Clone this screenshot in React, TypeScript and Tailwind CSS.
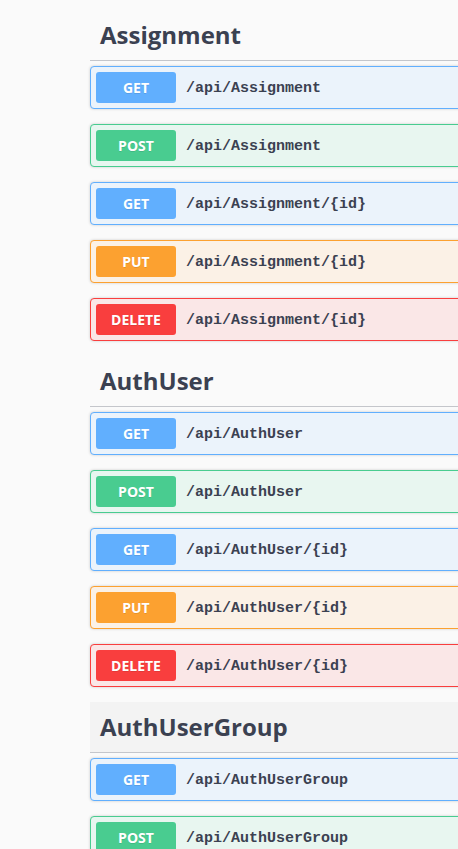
type Method = "GET" | "POST" | "PUT" | "DELETE";

const methodStyles: Record<Method, { block: string; badge: string }> = {
  GET: { block: "border-[#61affe] bg-[#ebf3fb]", badge: "bg-[#61affe]" },
  POST: { block: "border-[#49cc90] bg-[#e8f6f0]", badge: "bg-[#49cc90]" },
  PUT: { block: "border-[#fca130] bg-[#fbf1e6]", badge: "bg-[#fca130]" },
  DELETE: { block: "border-[#f93e3e] bg-[#fae7e7]", badge: "bg-[#f93e3e]" },
};

const tags: { name: string; hover?: boolean; ops: [Method, string][] }[] = [
  {
    name: "Assignment",
    ops: [
      ["GET", "/api/Assignment"],
      ["POST", "/api/Assignment"],
      ["GET", "/api/Assignment/{id}"],
      ["PUT", "/api/Assignment/{id}"],
      ["DELETE", "/api/Assignment/{id}"],
    ],
  },
  {
    name: "AuthUser",
    ops: [
      ["GET", "/api/AuthUser"],
      ["POST", "/api/AuthUser"],
      ["GET", "/api/AuthUser/{id}"],
      ["PUT", "/api/AuthUser/{id}"],
      ["DELETE", "/api/AuthUser/{id}"],
    ],
  },
  {
    name: "AuthUserGroup",
    hover: true,
    ops: [
      ["GET", "/api/AuthUserGroup"],
      ["POST", "/api/AuthUserGroup"],
    ],
  },
];

function Operation({ method, path }: { method: Method; path: string }) {
  const s = methodStyles[method];
  return (
    <div
      className={`mb-[15px] rounded-[4px] border shadow-[0_0_3px_rgba(0,0,0,0.19)] ${s.block}`}
    >
      <div className="flex items-center p-[5px]">
        <span
          className={`min-w-[80px] rounded-[3px] py-[6px] text-center text-[14px] leading-[19px] font-bold text-white [text-shadow:0_1px_0_rgba(0,0,0,0.1)] ${s.badge}`}
          style={{ fontFamily: '"Open Sans", sans-serif' }}
        >
          {method}
        </span>
        <span
          className="px-[10px] pt-[4px] text-[15px] font-semibold text-[#3b4151]"
          style={{ fontFamily: '"Liberation Mono", monospace' }}
        >
          {path}
        </span>
      </div>
    </div>
  );
}

export default function App() {
  return (
    <div className="min-h-screen w-[458px] overflow-hidden bg-[#fafafa] pt-[10px]">
      <div className="ml-[90px] w-[600px]">
        {tags.map((tag) => (
          <div key={tag.name}>
            <h3
              className={`mb-[5px] border-b border-[#c4c6cb] pt-[10px] pb-[10px] pl-[10px] text-[24px] leading-[30px] font-bold text-[#3b4151] ${
                tag.hover ? "bg-[#f3f3f3]" : ""
              }`}
              style={{ fontFamily: '"Open Sans", sans-serif' }}
            >
              {tag.name}
            </h3>
            {tag.ops.map(([m, p], i) => (
              <Operation key={i} method={m} path={p} />
            ))}
          </div>
        ))}
      </div>
    </div>
  );
}
